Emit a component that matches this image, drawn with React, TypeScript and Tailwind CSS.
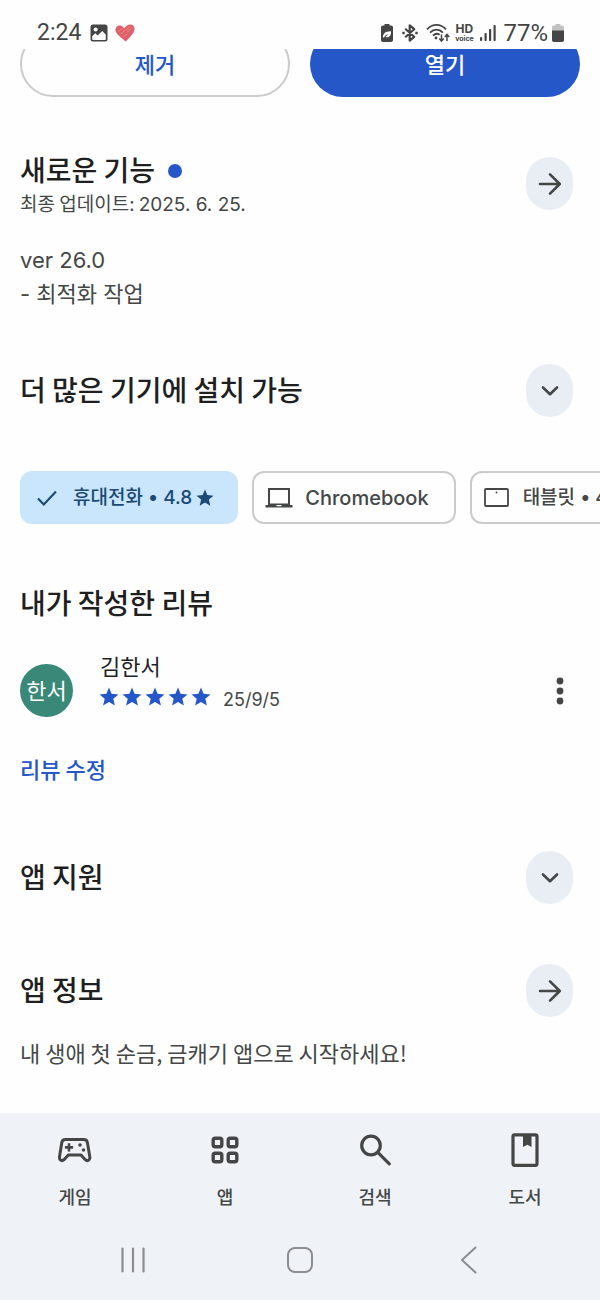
import React from "react";

const KR = "font-['Noto_Sans_CJK_KR',sans-serif]";
const LATIN = "font-['Inter','Noto_Sans_CJK_KR',sans-serif]";

function Star({ className }: { className: string }) {
  return (
    <svg viewBox="0 0 20 20" className={className} fill="currentColor" aria-hidden="true">
      <path d="M10 .5l2.600 6.300 6.900.6-5.200 4.400 1.600 6.700L10 15l-5.900 3.500 1.600-6.700L.5 7.400l6.900-.6z" />
    </svg>
  );
}

function StatusBar() {
  return (
    <header className="z-10 flex h-[49px] shrink-0 items-center justify-between bg-[#fefefe] pt-4 pr-9 pl-[37px] text-[#454545]">
      <div className="flex items-center">
        <span className="font-['Roboto',sans-serif] text-[23px] leading-8">2:24</span>
        <svg width="18" height="18" viewBox="0 0 18 18" className="ml-[9px]" aria-hidden="true">
          <rect x=".5" y=".5" width="17" height="17" rx="2.5" fill="#454545" />
          <circle cx="5.6" cy="5.6" r="2" fill="#fff" />
          <path d="M2.2 12.3l3-3.1 2.5 2.4 4.6-4.6 3.5 3.7v4.5c0 .4-.3.7-.7.7H2.9c-.4 0-.7-.3-.7-.7z" fill="#fff" />
        </svg>
        <svg width="20" height="18" viewBox="0 0 20 18" className="ml-[7px]" aria-hidden="true">
          <path d="M10.6 17.6C7 14 .6 10.200.4 6 .3 2.400 3.300.9 5.600 1.600c1.700.5 2.900 1.500 3.600 3C10.400 2 13 .2 15.600.4c3 .3 4.400 2.900 3.800 5.600-.9 4-5.300 8.200-8.800 11.600z" fill="#e0606a" />
          <path d="M3.500 7.500l3-3M5.500 10l4-3.500M11 6l3.500-3M12.500 8l3.500-3M9 12.500l2.500-2" stroke="#f0969c" strokeWidth=".8" strokeLinecap="round" />
        </svg>
      </div>
      <div className="flex items-center">
        <svg width="12" height="18" viewBox="0 0 12 18" aria-hidden="true">
          <path d="M3.500 0h5v1.500H10c1.200 0 2 .8 2 2V16c0 1.200-.8 2-2 2H2c-1.200 0-2-.8-2-2V3.500c0-1.200.8-2 2-2h1.500z" fill="#454545" />
          <path d="M2 13.500c-.2-1.200 0-2.200.5-3.100C3.500 8 6 7.200 10 7.200c.4 4.300-2 6.700-5.300 5.800 1-1.600 1.900-2.400 3.100-3.100-2 .4-3.600 1.400-4.700 3.500z" fill="#fff" />
        </svg>
        <svg width="16" height="18" viewBox="0 0 16 18" className="ml-[9px]" fill="none" stroke="#454545" strokeWidth="2.200" aria-hidden="true">
          <path d="M3.200 4.700l9 8.100L7.700 16.600V1.400l4.500 3.800-9 8.100" strokeLinejoin="round" />
          <path d="M.3 9h2.400M13.300 9h2.400" strokeWidth="2.400" />
        </svg>
        <svg width="24" height="20" viewBox="0 0 24 20" className="ml-2" fill="none" stroke="#454545" aria-hidden="true">
          <path d="M1 6.300C6.500.4 14.500.4 20 6.300M4 9.600c4-4 9-4 13 0M7 12.600c2.300-2.300 4.700-2.300 6.600-.8" strokeWidth="1.900" />
          <circle cx="10" cy="15" r="1.400" fill="#454545" stroke="none" />
          <path d="M15.500 11.500v6.500M13.300 15.500l2.200 2.600 2.200-2.600M21 18v-6.500M18.800 14l2.200-2.600 2.200 2.600" strokeWidth="1.500" />
        </svg>
        <span className="ml-1 flex w-5 flex-col items-center font-['Inter',sans-serif] font-bold">
          <span className="text-[12px] leading-[12px]">HD</span>
          <span className="text-[7px] leading-[8px]">voice</span>
        </span>
        <svg width="16" height="18" viewBox="0 0 16 18" className="ml-[6px]" fill="#454545" aria-hidden="true">
          <rect x="0" y="13" width="2.200" height="4" rx=".8" />
          <rect x="4.500" y="9" width="2.200" height="8" rx=".8" />
          <rect x="9" y="5" width="2.200" height="12" rx=".8" />
          <rect x="13.500" y="1" width="2.200" height="16" rx=".8" />
        </svg>
        <span className="ml-[7px] font-['Roboto',sans-serif] text-[24px] leading-8">77%</span>
        <svg width="12" height="18" viewBox="0 0 12 18" className="ml-1" aria-hidden="true">
          <path d="M3.500 0h5v1.500H10c1.200 0 2 .8 2 2V7H0V3.500c0-1.200.8-2 2-2h1.500z" fill="#c2c2c2" />
          <path d="M0 6.500h12V16c0 1.200-.8 2-2 2H2c-1.200 0-2-.8-2-2z" fill="#454545" />
        </svg>
      </div>
    </header>
  );
}

function RoundButton({ kind, label }: { kind: "arrow" | "chevron"; label: string }) {
  return (
    <button
      type="button"
      aria-label={label}
      className="flex h-[53px] w-[47px] shrink-0 items-center justify-center rounded-full bg-[#e9eef5] text-[#444746]"
    >
      <svg width="24" height="24" viewBox="0 0 24 24" fill="none" stroke="currentColor" strokeWidth="2.600" strokeLinecap="round" strokeLinejoin="round" aria-hidden="true">
        {kind === "arrow" ? <path d="M2 12h19.800M12 2.400l9.800 9.600-9.800 9.600" /> : <path d="M5 8.500l7 6.700 7-6.700" />}
      </svg>
    </button>
  );
}

function Title({ children }: { children: React.ReactNode }) {
  return <h2 className="pb-1 text-[28px] leading-8 font-medium text-[#1f1f1f]">{children}</h2>;
}

const chipBase = `flex h-[53px] shrink-0 items-center rounded-xl text-[19px] font-medium whitespace-nowrap ${LATIN}`;
const chipOutline = "border-2 border-[#cbcbcb] text-[#444746]";

function DeviceChips() {
  return (
    <div className="mt-[54px] flex gap-[14px] overflow-x-auto pl-5 [scrollbar-width:none]">
      <button type="button" aria-pressed="true" className={`${chipBase} bg-[#c9e6fd] pr-6 pl-4 text-[#1b4a75]`}>
        <svg width="22" height="20" viewBox="0 0 22 20" fill="none" stroke="currentColor" strokeWidth="2.200" aria-hidden="true">
          <path d="M2 10.500l5.800 6L20 3.500" />
        </svg>
        <span className="ml-[15px]">휴대전화 • 4.8</span>
        <Star className="ml-1 size-[18px]" />
      </button>
      <button type="button" aria-pressed="false" className={`${chipBase} ${chipOutline} pr-[25px] pl-[11px]`}>
        <svg width="28" height="22" viewBox="0 0 28 22" aria-hidden="true">
          <path fillRule="evenodd" d="M3 1h22v17h2.500v2.500H.5V18H3zM5 3v13.500h18V3zM11.500 18v1.200h5V18z" fill="currentColor" />
        </svg>
        <span className="ml-3 text-[20px]">Chromebook</span>
      </button>
      <button type="button" aria-pressed="false" className={`${chipBase} ${chipOutline} pr-6 pl-3`}>
        <svg width="25" height="19" viewBox="0 0 25 19" aria-hidden="true">
          <rect x="1" y="1" width="23" height="17" rx="1" fill="none" stroke="currentColor" strokeWidth="1.800" />
          <circle cx="12.500" cy="4.500" r=".9" fill="currentColor" />
        </svg>
        <span className="ml-[14px]">태블릿 • 4.8</span>
        <Star className="ml-1 size-[18px]" />
      </button>
    </div>
  );
}

const navItems = [
  {
    label: "게임",
    icon: (
      <svg width="36" height="36" viewBox="0 0 36 36" fill="none" stroke="currentColor" strokeWidth="3" strokeLinejoin="round" aria-hidden="true">
        <path d="M8.500 7.500h18.200c2.100 0 3.400 1.100 3.700 3.100l2.400 14.200c.4 3.400-2.400 4.900-4.500 2.900l-4.300-4.700H11.300L7 27.700c-2.100 2-4.900.5-4.500-2.900l2.300-14.200c.3-2 1.600-3.100 3.700-3.100z" />
        <path d="M12 11.300v8.200M7.900 15.400h8.200" strokeWidth="2.600" />
        <circle cx="23" cy="13" r="1.800" fill="currentColor" stroke="none" />
        <circle cx="26.500" cy="18" r="1.800" fill="currentColor" stroke="none" />
      </svg>
    ),
  },
  {
    label: "앱",
    icon: (
      <svg width="36" height="36" viewBox="0 0 36 36" fill="none" stroke="currentColor" strokeWidth="3.400" aria-hidden="true">
        <rect x="6.200" y="6.200" width="8.600" height="8.600" rx="2" />
        <rect x="21.200" y="6.200" width="8.600" height="8.600" rx="2" />
        <rect x="6.200" y="21.200" width="8.600" height="8.600" rx="2" />
        <rect x="21.200" y="21.200" width="8.600" height="8.600" rx="2" />
      </svg>
    ),
  },
  {
    label: "검색",
    icon: (
      <svg width="36" height="36" viewBox="0 0 36 36" fill="none" stroke="currentColor" strokeWidth="3.200" strokeLinecap="round" aria-hidden="true">
        <circle cx="14" cy="13.500" r="9.300" />
        <path d="M20.800 20.300l11.500 11.500" />
      </svg>
    ),
  },
  {
    label: "도서",
    icon: (
      <svg width="36" height="36" viewBox="0 0 36 36" fill="none" stroke="currentColor" strokeWidth="3.200" aria-hidden="true">
        <rect x="6" y="2.800" width="24" height="30.500" rx="1.500" />
        <path d="M16 3h8.500v12l-4.200-2.200L16 15z" fill="currentColor" stroke="none" />
      </svg>
    ),
  },
];

function BottomNav() {
  return (
    <footer className="sticky bottom-0 shrink-0 bg-[#eff3f8] pt-[17px] pb-5">
      <nav className="grid grid-cols-4 text-[#444746]">
        {navItems.map((item) => (
          <a key={item.label} href="#" className="flex flex-col items-center">
            <span className="flex h-10 items-center">{item.icon}</span>
            <span className="mt-3 text-[18px] leading-7 font-medium">{item.label}</span>
          </a>
        ))}
      </nav>
      <div className="mt-[30px] grid grid-cols-3 px-[49px] text-[#8b8d90]">
        <button type="button" aria-label="최근 앱" className="flex h-10 items-center justify-center">
          <svg width="26" height="26" viewBox="0 0 26 26" fill="none" stroke="currentColor" strokeWidth="2.200" strokeLinecap="round" aria-hidden="true">
            <path d="M2.500 1.500v23M13 1.500v23M23.500 1.500v23" />
          </svg>
        </button>
        <button type="button" aria-label="홈" className="flex h-10 items-center justify-center">
          <svg width="28" height="28" viewBox="0 0 28 28" fill="none" stroke="currentColor" strokeWidth="2" aria-hidden="true">
            <rect x="2" y="2" width="24" height="24" rx="7" />
          </svg>
        </button>
        <button type="button" aria-label="뒤로" className="flex h-10 items-center justify-center">
          <svg width="28" height="28" viewBox="0 0 28 28" fill="none" stroke="currentColor" strokeWidth="2" strokeLinecap="round" strokeLinejoin="round" aria-hidden="true">
            <path d="M22.500 1.500L9 14l13.500 12.500" />
          </svg>
        </button>
      </div>
    </footer>
  );
}

export default function App() {
  return (
    <div className={`flex min-h-screen flex-col bg-[#fefefe] ${KR}`}>
      <StatusBar />
      <main className="grow overflow-hidden text-[22px] leading-[26px] text-[#444746]">
        <div className="-mt-[18px] grid grid-cols-2 gap-5 px-5 font-medium">
          <button type="button" className="h-[66px] rounded-full border-2 border-[#cbcbcb] pb-[2px] text-[#2657c8]">제거</button>
          <button type="button" className="h-[66px] rounded-full bg-[#2657c8] pb-[2px] text-white">열기</button>
        </div>

        <section className="mt-14 pr-[27px] pl-5">
          <div className="flex items-start justify-between">
            <div>
              <div className="flex items-center gap-[13px]">
                <Title>새로운 기능</Title>
                <span className="size-[14px] rounded-full bg-[#2657c8]" />
              </div>
              <p className="h-[30px] text-[19px] leading-7">
                최종 업데이트: <time dateTime="2025-06-25" className="font-['Inter',sans-serif]">2025. 6. 25.</time>
              </p>
            </div>
            <div className="pt-1">
              <RoundButton kind="arrow" label="새로운 기능 자세히 보기" />
            </div>
          </div>
          <p className={`mt-6 leading-[34px] ${LATIN}`}>
            ver 26.0
            <br />- 최적화 작업
          </p>
        </section>

        <section className="mt-[53px]">
          <div className="flex items-center justify-between pr-[27px] pl-5">
            <Title>더 많은 기기에 설치 가능</Title>
            <RoundButton kind="chevron" label="기기 목록 펼치기" />
          </div>
          <DeviceChips />
        </section>

        <section className="mt-[62px] px-5">
          <Title>내가 작성한 리뷰</Title>
          <div className="mt-[30px] flex items-start">
            <div className="mt-3 flex size-[53px] shrink-0 items-center justify-center rounded-full bg-[#3a8878] pb-1 text-white">한서</div>
            <div className="ml-[27px] grow">
              <p className="pb-1 text-[#1f1f1f]">김한서</p>
              <div className="-ml-px flex h-[30px] items-center">
                <span role="img" aria-label="별점 5점" className="flex gap-[3px] text-[#2657c8]">
                  {[1, 2, 3, 4, 5].map((n) => (
                    <Star key={n} className="size-5" />
                  ))}
                </span>
                <time dateTime="2025-09-05" className="ml-3 pt-[6px] font-['Inter',sans-serif] text-[18px]">25/9/5</time>
              </div>
            </div>
            <button type="button" aria-label="더보기" className="mt-3 flex h-[53px] w-10 items-center justify-center">
              <svg width="8" height="28" viewBox="0 0 8 28" fill="currentColor" aria-hidden="true">
                <circle cx="4" cy="4" r="3.400" />
                <circle cx="4" cy="14" r="3.400" />
                <circle cx="4" cy="24" r="3.400" />
              </svg>
            </button>
          </div>
          <a href="#" className="mt-[38px] block w-fit pb-1 font-medium text-[#2657c8]">리뷰 수정</a>
        </section>

        <section className="mt-[66px] flex items-center justify-between pr-[27px] pl-5">
          <Title>앱 지원</Title>
          <RoundButton kind="chevron" label="앱 지원 펼치기" />
        </section>

        <section className="mt-[60px] pr-[27px] pb-11 pl-5">
          <div className="flex items-center justify-between">
            <Title>앱 정보</Title>
            <RoundButton kind="arrow" label="앱 정보 자세히 보기" />
          </div>
          <p className="mt-[22px] pb-1">내 생애 첫 순금, 금캐기 앱으로 시작하세요!</p>
        </section>
      </main>
      <BottomNav />
    </div>
  );
}
